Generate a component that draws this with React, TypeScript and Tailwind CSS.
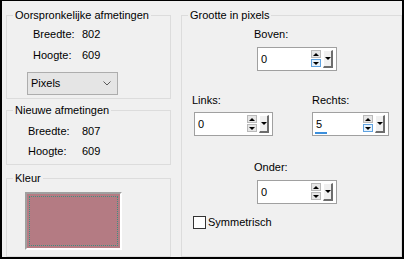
import React from "react";

const font = { fontFamily: '"Liberation Sans", Arial, sans-serif' };

const Up = () => (
	<div className="w-0 h-0 border-x-[3px] border-x-transparent border-b-[3px] border-b-black" />
);
const Down = () => (
	<div className="w-0 h-0 border-x-[3px] border-x-transparent border-t-[3px] border-t-black" />
);

interface SpinProps {
	value: string;
	width: string;
	focused?: boolean;
	caret?: boolean;
}

const Spin: React.FC<SpinProps> = ({ value, width, focused, caret }) => {
	return (
		<div className={`flex h-[24px] border border-[#a0a0a0] bg-white ${width}`}>
			<div className="flex flex-1 flex-col">
				<div className="h-[19px] pl-[3px] pt-[2px] leading-[19px]">{value}</div>
				{caret && <div className="ml-[2px] h-[2px] w-[12px] bg-[#3c8fdc]" />}
			</div>
			<div className="mt-[2px] flex w-[10px] flex-col">
				<div className="flex h-[8px] items-center justify-center border border-[#b9b9b9] bg-[#e6e6e6]">
					<Up />
				</div>
				<div
					className={`mt-[1px] flex h-[8px] items-center justify-center border ${
						focused ? "border-[#5fa2e0] bg-[#e5f1fb]" : "border-[#b9b9b9] bg-[#e6e6e6]"
					}`}
				>
					<Down />
				</div>
			</div>
			<div className="ml-[2px] mr-[3px] mt-[2px] flex h-[18px] w-[10px] justify-center border-l border-t border-r-2 border-b-2 border-l-white border-t-white border-r-[#6d6d6d] border-b-[#6d6d6d] bg-[#f0f0f0] pt-[6px]">
				<Down />
			</div>
		</div>
	);
};

export default function App() {
	return (
		<div
			style={font}
			className="flex h-[259px] w-[404px] border-l-2 border-t border-r-2 border-b-2 border-black bg-[#f0f0f0] pl-[4px] pt-[7px] text-[11px] text-black"
		>
			<div className="flex w-[165px] flex-col">
				<fieldset className="h-[91px] border border-[#dcdcdc]">
					<legend className="ml-[6px] px-[2px] leading-[14px]">Oorspronkelijke afmetingen</legend>
					<div className="ml-[26px] mt-[5px] flex leading-[14px]">
						<span className="w-[49px]">Breedte:</span>
						<span>802</span>
					</div>
					<div className="ml-[26px] mt-[7px] flex leading-[14px]">
						<span className="w-[49px]">Hoogte:</span>
						<span>609</span>
					</div>
					<div className="ml-[20px] mt-[10px] flex h-[23px] w-[91px] items-center justify-between border border-[#adadad] bg-[#e5e5e5] pl-[3px] pr-[6px]">
						<span>Pixels</span>
						<svg width="8" height="5" viewBox="0 0 8 5">
							<path d="M0.5 0.5 L4 4 L7.5 0.5" fill="none" stroke="#5a5a5a" strokeWidth="1" />
						</svg>
					</div>
				</fieldset>

				<fieldset className="mt-[4px] h-[62px] border border-[#dcdcdc]">
					<legend className="ml-[6px] px-[2px] leading-[14px]">Nieuwe afmetingen</legend>
					<div className="ml-[21px] mt-[7px] flex leading-[14px]">
						<span className="w-[54px]">Breedte:</span>
						<span>807</span>
					</div>
					<div className="ml-[21px] mt-[6px] flex leading-[14px]">
						<span className="w-[54px]">Hoogte:</span>
						<span>609</span>
					</div>
				</fieldset>

				<fieldset className="mt-[6px] h-[86px] border border-[#dcdcdc]">
					<legend className="ml-[6px] px-[2px] leading-[14px]">Kleur</legend>
					<div className="ml-[18px] mt-[7px] h-[58px] w-[97px] border-l-2 border-t-2 border-r-2 border-b-2 border-l-[#a0a0a0] border-t-[#a0a0a0] border-r-white border-b-white bg-[#b47b83] p-[2px]">
						<div className="h-full w-full border border-dotted border-[#3f8f80]" />
					</div>
				</fieldset>
			</div>

			<fieldset className="ml-[10px] h-[249px] w-[221px] border border-[#dcdcdc]">
				<legend className="ml-[6px] px-[2px] leading-[14px]">Grootte in pixels</legend>

				<div className="ml-[72px] mt-[5px] leading-[14px]">Boven:</div>
				<div className="ml-[75px] mt-[6px]">
					<Spin value="0" width="w-[80px]" focused />
				</div>

				<div className="mt-[22px] flex">
					<div className="ml-[10px] w-[120px]">
						<div className="leading-[14px]">Links:</div>
						<div className="ml-[2px] mt-[5px]">
							<Spin value="0" width="w-[79px]" />
						</div>
					</div>
					<div>
						<div className="leading-[14px]">Rechts:</div>
						<div className="mt-[5px]">
							<Spin value="5" width="w-[77px]" focused caret />
						</div>
					</div>
				</div>

				<div className="ml-[72px] mt-[24px] leading-[14px]">Onder:</div>
				<div className="ml-[75px] mt-[6px]">
					<Spin value="0" width="w-[80px]" />
				</div>

				<div className="ml-[11px] mt-[11px] flex items-center">
					<div className="h-[13px] w-[13px] border border-[#333333] bg-white" />
					<span className="ml-[2px] leading-[14px]">Symmetrisch</span>
				</div>
			</fieldset>
		</div>
	);
}
